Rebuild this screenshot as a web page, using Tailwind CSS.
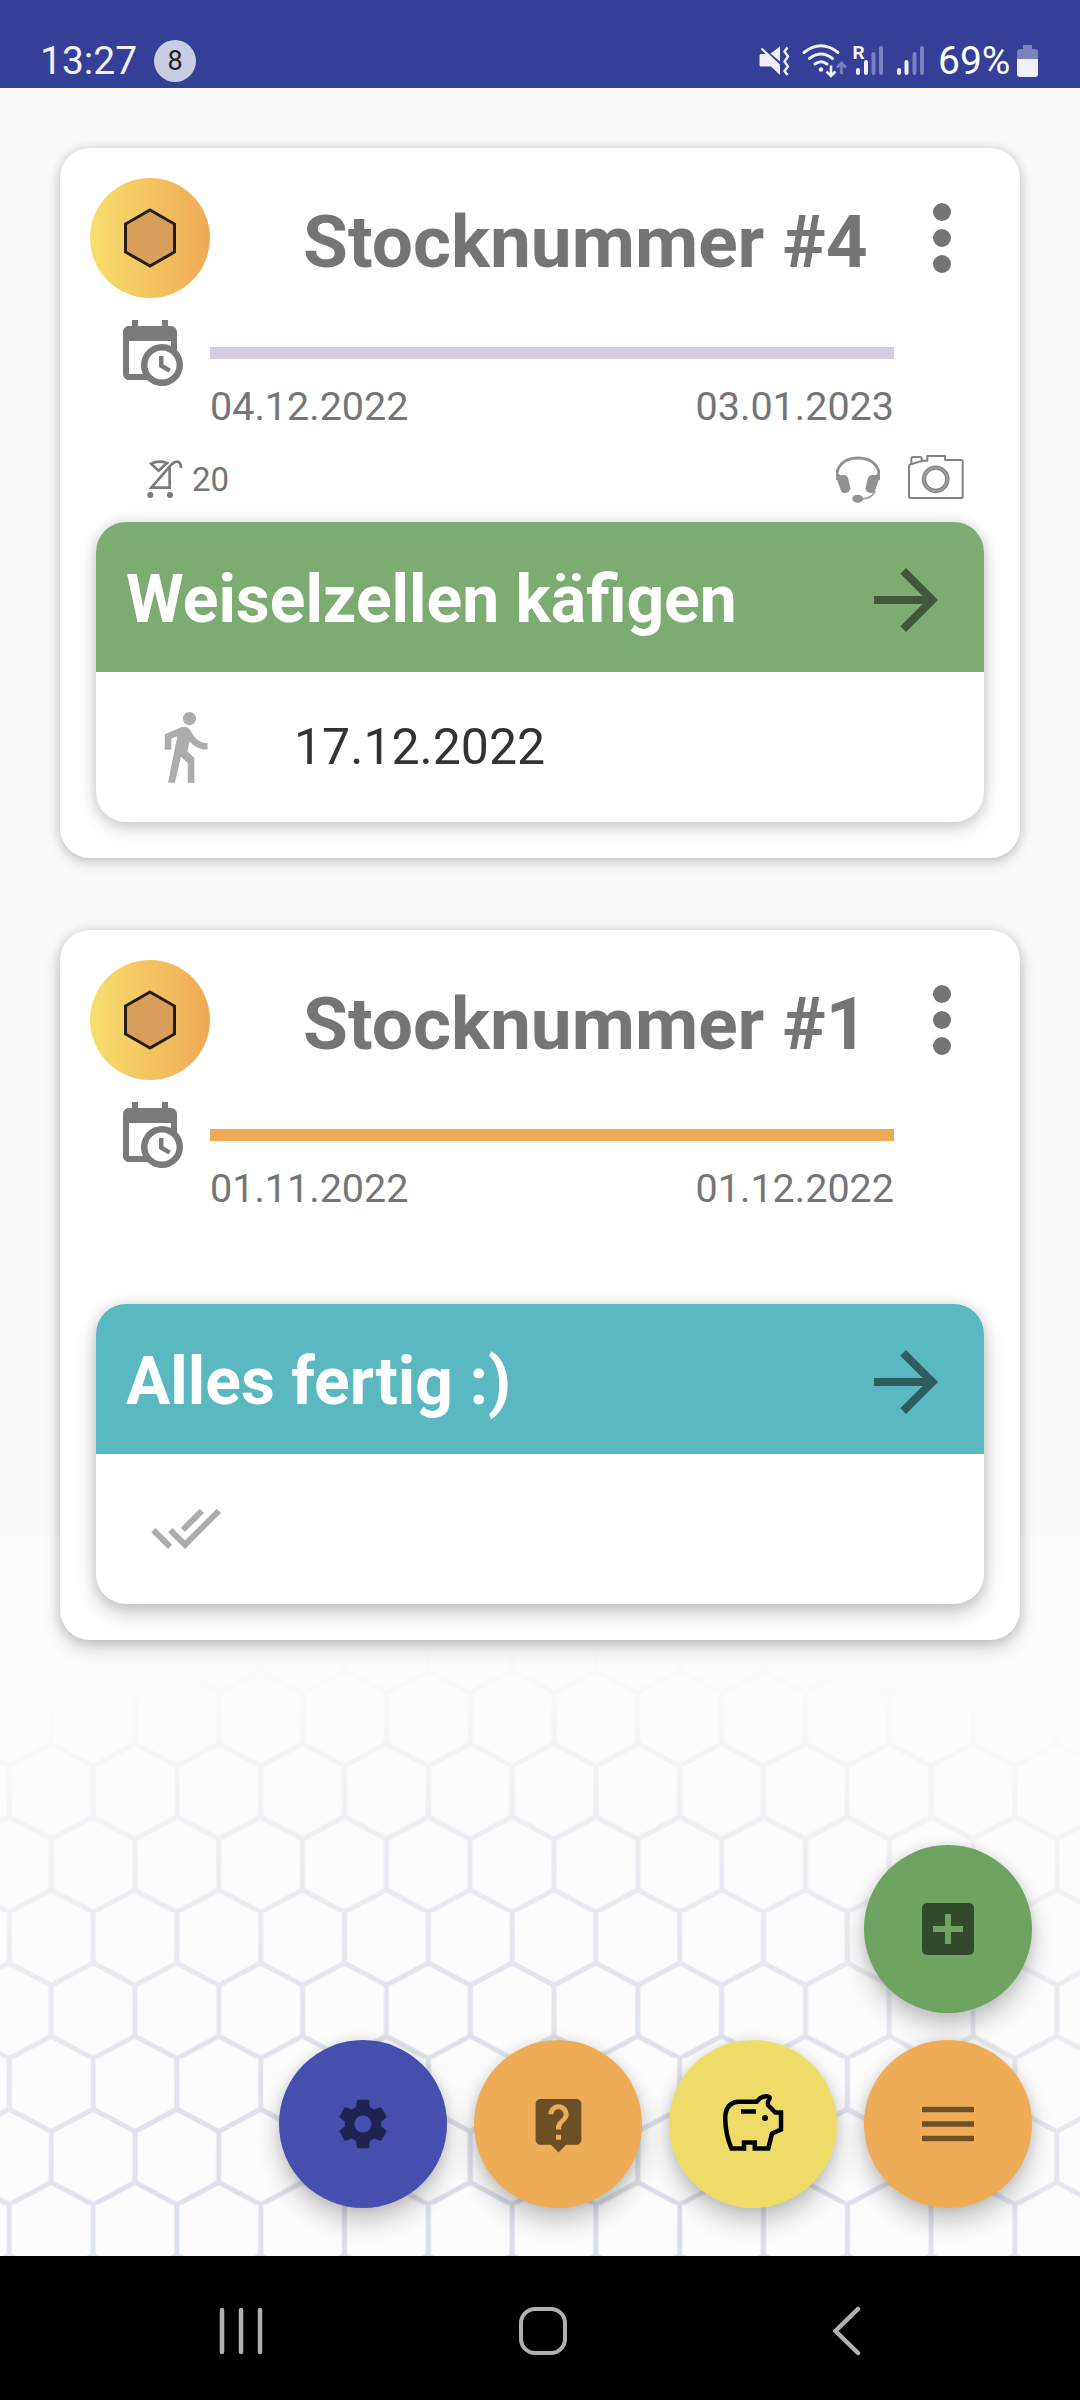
<!DOCTYPE html>
<html lang="de">
<head>
    <meta charset="UTF-8">
    <meta name="viewport" content="width=device-width, initial-scale=1.0">
    <title>Stocknummern</title>
    <script src="https://cdn.jsdelivr.net/npm/@tailwindcss/browser@4"></script>
</head>
<body class="bg-[#fafafa] font-['Roboto',sans-serif]">
    <!-- Shared icons -->
    <svg class="hidden" xmlns="http://www.w3.org/2000/svg">
        <symbol id="hexagon" viewBox="0 0 52 60">
            <path d="M26 2 50.5 16V44L26 58 1.5 44V16Z" fill="#d89f5b" stroke="#241d10" stroke-width="3"/>
        </symbol>
        <symbol id="calendar-clock" viewBox="0 0 24 24">
            <path fill="currentColor" d="M15,13H16.5V15.82L18.94,17.23L18.19,18.53L15,16.69V13M19,8H5V19H9.67C9.24,18.09 9,17.07 9,16A7,7 0 0,1 16,9C17.07,9 18.09,9.24 19,9.67V8M5,21C3.89,21 3,20.1 3,19V5C3,3.89 3.89,3 5,3H6V1H8V3H16V1H18V3H19A2,2 0 0,1 21,5V11.1C22.24,12.36 23,14.09 23,16A7,7 0 0,1 16,23C14.09,23 12.36,22.24 11.1,21H5M16,11.15A4.85,4.85 0 0,0 11.15,16C11.15,18.68 13.32,20.85 16,20.85A4.85,4.85 0 0,0 20.85,16C20.85,13.32 18.68,11.15 16,11.15Z"/>
        </symbol>
        <symbol id="more" viewBox="0 0 18 70">
            <circle cx="9" cy="9" r="9" fill="currentColor"/>
            <circle cx="9" cy="35" r="9" fill="currentColor"/>
            <circle cx="9" cy="61" r="9" fill="currentColor"/>
        </symbol>
        <symbol id="arrow" viewBox="0 0 24 24">
            <path fill="currentColor" d="M12 4l-1.41 1.41L16.17 11H4v2h12.17l-5.58 5.59L12 20l8-8z"/>
        </symbol>
    </svg>

    <div class="relative w-[1080px] h-[2400px] flex flex-col overflow-hidden">
        <!-- Honeycomb background -->
        <svg class="absolute left-0 top-[1536px]" width="1080" height="720" viewBox="0 1536 1080 720">
            <defs>
                <pattern id="comb" patternUnits="userSpaceOnUse" x="9.3" y="1766" width="83.8" height="146.2">
                    <path d="M0 -1V50.8L41.9 73.1L83.8 50.8V-1M41.9 73.1V123.9M-2 147.3L41.9 123.9L85.8 147.3" fill="none" stroke="#d8dce6" stroke-width="5"/>
                </pattern>
                <radialGradient id="fade" gradientUnits="userSpaceOnUse" cx="0" cy="0" r="1" gradientTransform="translate(520 2256) scale(1120 620)">
                    <stop offset="0" stop-color="#fff"/>
                    <stop offset=".35" stop-color="#fff" stop-opacity=".85"/>
                    <stop offset="1" stop-color="#fff" stop-opacity="0"/>
                </radialGradient>
                <mask id="dome" maskUnits="userSpaceOnUse" x="0" y="1536" width="1080" height="720">
                    <rect x="0" y="1536" width="1080" height="720" fill="url(#fade)"/>
                </mask>
            </defs>
            <rect y="1536" width="1080" height="720" fill="#fcfcfc"/>
            <rect y="1536" width="1080" height="720" fill="url(#comb)" mask="url(#dome)"/>
        </svg>

        <!-- Status bar -->
        <header class="relative h-[88px] shrink-0 bg-[#343f98] flex items-start pl-10 pr-[42px] text-[#f1f2fa]">
            <span class="mt-[38px] w-[97px] text-[39px] leading-[46px]">13:27</span>
            <span class="mt-10 ml-[17px] size-[42px] rounded-full bg-[#c9cde4] text-[#222] text-[27px] leading-[42px] text-center">8</span>
            <svg class="ml-auto mt-[36px]" width="167" height="48" viewBox="759 36 167 48" fill="none" stroke="#eff0f9">
                <!-- muted / vibrate -->
                <path d="M759.500 55.500q0-1.500 1.500-1.500h5.500l13.500 12v9l-9-8.500h-10q-1.500 0-1.500-1.500zM770.500 53.500l9.500-7v15z" fill="#eff0f9" stroke="none"/>
                <path d="M761.500 48.500l18 17" stroke-width="2.200"/>
                <path d="M787.500 47.500l-3 4 3.500 5-3.500 5 3.500 5-3.500 4.500 3 4" stroke-width="2.400"/>
                <!-- wifi -->
                <g stroke-width="3" stroke-linecap="round">
                    <path d="M804 52.500q17-13.500 34 0M809.500 58.500q11.500-9 23 0M815 64q6-4.500 12 0"/>
                </g>
                <circle cx="821" cy="69.500" r="2.300" fill="#eff0f9" stroke="none"/>
                <path d="M831 65.500v10M826.500 71.500l4.500 4.500 4.500-4.500" stroke-width="2.600"/>
                <path d="M841.500 74v-10.500M837 67.500l4.500-4.500 4.500 4.500" stroke-width="2.600" stroke="#7a82bf"/>
                <text x="852.500" y="59" font-size="19" font-weight="700" fill="#eff0f9" stroke="none">R</text>
                <!-- signal bars -->
                <g stroke-width="4" stroke-linecap="round">
                    <path d="M858 70v3M866 62v11M899 70v3M906.500 62v11"/>
                    <path d="M873.500 54v19M881 48v25M914.500 54v19M922 48v25" stroke="#7a82bf"/>
                </g>
            </svg>
            <span class="mt-[38px] ml-[12px] w-[79px] text-[39px] leading-[46px] text-white">69%</span>
            <!-- battery -->
            <svg class="mt-[45px]" width="21" height="32" viewBox="0 0 21 32">
                <path d="M6 0h9v4h3q3 0 3 3v7h-21v-7q0-3 3-3h3z" fill="#7a82bf"/>
                <path d="M0 14h21v15q0 3-3 3h-15q-3 0-3-3z" fill="#eff0f9"/>
            </svg>
        </header>

        <main class="relative flex-1 flex flex-col gap-[72px] px-[60px] pt-[60px]">
            <!-- Stocknummer #4 -->
            <section class="h-[710px] rounded-[30px] bg-white px-[30px] pt-[30px] pb-9 flex flex-col text-[#757575] shadow-[0_5px_14px_rgba(0,0,0,0.16),0_0_12px_rgba(0,0,0,0.12)]">
                <div class="h-[120px] flex items-start">
                    <div class="size-[120px] rounded-full bg-linear-to-r from-[#f7df6c] to-[#efa955] flex items-center justify-center">
                        <svg class="w-[52px] h-[60px]"><use href="#hexagon"/></svg>
                    </div>
                    <h2 class="ml-[93px] mt-[22px] text-[73px] leading-[84px] font-bold whitespace-nowrap">Stocknummer #4</h2>
                    <svg class="ml-auto mr-[39px] mt-[25px] w-[18px] h-[70px]"><use href="#more"/></svg>
                </div>
                <div class="h-[132px] flex">
                    <div class="w-[120px] pl-6 pt-[19px]">
                        <svg class="size-[72px] text-[#7a7a7a]"><use href="#calendar-clock"/></svg>
                    </div>
                    <div class="w-[684px] pt-[49px]">
                        <div class="h-3 bg-[#d5cce6]"></div>
                        <div class="mt-6 flex justify-between text-[39.5px] leading-[47px]">
                            <span>04.12.2022</span>
                            <span>03.01.2023</span>
                        </div>
                    </div>
                </div>
                <div class="h-[92px] pt-[6px] pl-[57px] pr-[26px] flex items-center">
                    <!-- stroller -->
                    <svg class="w-[36px] h-[38px]" viewBox="0 0 108 114" fill="none" stroke="#7a7a7a" stroke-width="8">
                        <path d="M12 11Q35 0 60 9L35 32Z"/>
                        <path d="M68 20V83H13L73 14Q84 1 95 6Q102 11 102 24"/>
                        <circle cx="10" cy="105" r="9" fill="#7a7a7a" stroke="none"/>
                        <circle cx="69" cy="105" r="9" fill="#7a7a7a" stroke="none"/>
                    </svg>
                    <span class="ml-[9px] mt-[2px] text-[33px] leading-[38px]">20</span>
                    <!-- headset -->
                    <svg class="ml-auto w-[44px] h-[47px]" viewBox="0 0 132 141">
                        <path d="M4 72C-4 32 24 6 66 6S136 32 128 72" fill="none" stroke="#939191" stroke-width="9"/>
                        <path d="M2 52Q2 80 13 94L20 60ZM130 52Q130 80 119 94L112 60Z" fill="#939191"/>
                        <rect x="10" y="57" width="30" height="54" rx="13" fill="#939191" transform="rotate(-14 25 84)"/>
                        <rect x="92" y="57" width="30" height="54" rx="13" fill="#939191" transform="rotate(14 107 84)"/>
                        <path d="M117 105Q108 128 76 129" fill="none" stroke="#a5a3a3" stroke-width="6"/>
                        <ellipse cx="65" cy="128" rx="16" ry="12" fill="#939191"/>
                    </svg>
                    <!-- camera -->
                    <svg class="ml-[28px] mb-1 w-[56px] h-[44px]" viewBox="0 0 168 132" fill="none" stroke="#828282" stroke-width="6" stroke-linejoin="round">
                        <path d="M3 33Q3 29 8 28L45 17H58V3H111V15H159Q164 15 164 20V125Q164 129 159 129H8Q3 129 3 124Z"/>
                        <path d="M10 27V12Q10 6 16 6H36Q41 6 42 17"/>
                        <circle cx="83" cy="73" r="35" stroke="#858585" stroke-width="13"/>
                        <circle cx="83" cy="73" r="35" stroke="#a0a0a0" stroke-width="5"/>
                    </svg>
                </div>
                <div class="mx-[6px] h-[300px] rounded-[30px] bg-white shadow-[0_6px_18px_rgba(0,0,0,0.18),0_0_14px_rgba(0,0,0,0.1)]">
                    <div class="h-[150px] rounded-t-[30px] bg-[#7dac73] flex items-center justify-between px-[30px] pt-[6px]">
                        <span class="text-[66px] leading-[78px] font-bold text-white">Weiselzellen käfigen</span>
                        <svg class="size-24 text-[#42573c]"><use href="#arrow"/></svg>
                    </div>
                    <div class="h-[150px] flex items-center">
                        <svg class="ml-[49px] mb-[2px] size-[79px]" viewBox="0 0 24 24" fill="#acacac">
                            <path d="M13.500 5.500c1.100 0 2-.9 2-2s-.9-2-2-2-2 .9-2 2 .9 2 2 2zM9.800 8.900L7 23h2.100l1.800-8 2.100 2v6h2v-7.500l-2.100-2 .6-3C14.800 12 16.800 13 19 13v-2c-1.900 0-3.500-1-4.300-2.400l-1-1.600c-.4-.6-1-1-1.700-1-.3 0-.5.1-.8.1L6 8.300V13h2V9.600l1.800-.7"/>
                        </svg>
                        <span class="ml-[70px] text-[50px] leading-[58px] text-[#333]">17.12.2022</span>
                    </div>
                </div>
            </section>

            <!-- Stocknummer #1 -->
            <section class="h-[710px] rounded-[30px] bg-white px-[30px] pt-[30px] pb-9 flex flex-col text-[#757575] shadow-[0_8px_18px_rgba(0,0,0,0.2),0_0_12px_rgba(0,0,0,0.12)]">
                <div class="h-[120px] flex items-start">
                    <div class="size-[120px] rounded-full bg-linear-to-r from-[#f7df6c] to-[#efa955] flex items-center justify-center">
                        <svg class="w-[52px] h-[60px]"><use href="#hexagon"/></svg>
                    </div>
                    <h2 class="ml-[93px] mt-[22px] text-[73px] leading-[84px] font-bold whitespace-nowrap">Stocknummer #1</h2>
                    <svg class="ml-auto mr-[39px] mt-[25px] w-[18px] h-[70px]"><use href="#more"/></svg>
                </div>
                <div class="h-[132px] flex">
                    <div class="w-[120px] pl-6 pt-[19px]">
                        <svg class="size-[72px] text-[#7a7a7a]"><use href="#calendar-clock"/></svg>
                    </div>
                    <div class="w-[684px] pt-[49px]">
                        <div class="h-3 bg-[#efaa56]"></div>
                        <div class="mt-6 flex justify-between text-[39.5px] leading-[47px]">
                            <span>01.11.2022</span>
                            <span>01.12.2022</span>
                        </div>
                    </div>
                </div>
                <div class="h-[92px]"></div>
                <div class="mx-[6px] h-[300px] rounded-[30px] bg-white shadow-[0_9px_20px_rgba(0,0,0,0.22),0_0_14px_rgba(0,0,0,0.1)]">
                    <div class="h-[150px] rounded-t-[30px] bg-[#59b8c0] flex items-center justify-between px-[30px] pt-[6px]">
                        <span class="text-[66px] leading-[78px] font-bold text-white">Alles fertig :)</span>
                        <svg class="size-24 text-[#2e5c5f]"><use href="#arrow"/></svg>
                    </div>
                    <div class="h-[150px] flex items-center">
                        <svg class="ml-[54px] mb-[2px] size-[72px]" viewBox="0 0 24 24" fill="#acacac">
                            <path d="M18 7l-1.410-1.410-6.340 6.340 1.410 1.410L18 7zm4.240-1.410L11.660 16.170 7.480 12l-1.410 1.410L11.660 19l12-12-1.420-1.410zM.41 13.410L6 19l1.410-1.410L1.830 12 .41 13.410z"/>
                        </svg>
                    </div>
                </div>
            </section>
        </main>

        <!-- Floating buttons -->
        <div class="absolute right-12 top-[1845px] flex flex-col items-end gap-[27px]">
            <button class="size-[168px] rounded-full bg-[#6fa361] flex items-center justify-center shadow-[0_14px_24px_rgba(0,0,0,0.22),0_0_12px_rgba(0,0,0,0.1)]">
                <svg width="52" height="52" viewBox="0 0 52 52">
                    <rect width="52" height="52" rx="5" fill="#324a2b"/>
                    <path d="M26 11V41M11 26H41" stroke="#6fa361" stroke-width="6"/>
                </svg>
            </button>
            <div class="flex gap-[27px]">
                <button class="size-[168px] rounded-full bg-[#444fae] flex items-center justify-center shadow-[0_14px_24px_rgba(0,0,0,0.22),0_0_12px_rgba(0,0,0,0.1)]">
                    <svg width="58" height="58" viewBox="0 0 24 24" fill="#1e2350">
                        <path d="M19.430 12.980c.04-.32.07-.64.07-.98s-.03-.66-.07-.98l2.110-1.650c.19-.15.24-.42.12-.64l-2-3.460c-.12-.22-.39-.3-.61-.22l-2.490 1c-.52-.4-1.080-.73-1.690-.98l-.38-2.650C14.460 2.180 14.250 2 14 2h-4c-.25 0-.46.18-.49.42l-.38 2.650c-.61.25-1.170.59-1.690.98l-2.490-1c-.23-.09-.49 0-.61.22l-2 3.460c-.13.22-.07.49.12.64l2.110 1.650c-.04.32-.07.65-.07.98s.03.66.07.98l-2.110 1.650c-.19.15-.24.42-.12.64l2 3.460c.12.22.39.3.61.22l2.490-1c.52.4 1.080.73 1.690.98l.38 2.650c.03.24.24.42.49.42h4c.25 0 .46-.18.49-.42l.38-2.650c.61-.25 1.170-.59 1.690-.98l2.490 1c.23.09.49 0 .61-.22l2-3.460c.12-.22.07-.49-.12-.64l-2.110-1.650zM12 15.500c-1.930 0-3.500-1.570-3.500-3.500s1.570-3.500 3.500-3.500 3.500 1.570 3.500 3.500-1.570 3.500-3.500 3.500z"/>
                    </svg>
                </button>
                <button class="size-[168px] rounded-full bg-[#efac56] flex items-center justify-center shadow-[0_14px_24px_rgba(0,0,0,0.22),0_0_12px_rgba(0,0,0,0.1)]">
                    <svg width="61" height="61" viewBox="0 0 24 24" fill="#6c4e27">
                        <path d="M19 2H5c-1.110 0-2 .9-2 2v14c0 1.100.89 2 2 2h4l3 3 3-3h4c1.100 0 2-.9 2-2V4c0-1.100-.9-2-2-2zm-6 16h-2v-2h2v2zm2.070-7.750l-.9.92C13.450 11.900 13 12.500 13 14h-2v-.5c0-1.100.45-2.100 1.170-2.830l1.240-1.260c.37-.36.59-.86.59-1.410 0-1.100-.9-2-2-2s-2 .9-2 2H8c0-2.210 1.790-4 4-4s4 1.790 4 4c0 .88-.36 1.680-.93 2.250z"/>
                    </svg>
                </button>
                <button class="size-[168px] rounded-full bg-[#efdc68] flex items-center justify-center shadow-[0_14px_24px_rgba(0,0,0,0.22),0_0_12px_rgba(0,0,0,0.1)]">
                    <!-- piggy bank -->
                    <svg width="66" height="66" viewBox="0 0 66 66" fill="none" stroke="#000" stroke-width="4.500">
                        <path d="M18 10.800H36.500Q41 5 47 5.200Q51 5.600 49 8.500Q47.500 10.500 48 14L55.300 21.600H61V38.500L52 42.500L48.300 57.400H34.800V51.500H24V57.400H11.500Q5.500 44 5.200 27Q5.500 12 18 10.800Z"/>
                        <path d="M21 20.500H36"/>
                        <circle cx="45" cy="27" r="3" fill="#000" stroke="none"/>
                    </svg>
                </button>
                <button class="size-[168px] rounded-full bg-[#efac56] flex items-center justify-center shadow-[0_14px_24px_rgba(0,0,0,0.22),0_0_12px_rgba(0,0,0,0.1)]">
                    <svg width="52" height="36" viewBox="0 0 52 36" stroke="#6c4e27" stroke-width="5.500">
                        <path d="M0 3.500H52M0 18H52M0 32.500H52"/>
                    </svg>
                </button>
            </div>
        </div>

        <!-- Navigation bar -->
        <nav class="relative h-36 shrink-0 bg-black flex items-center pl-[219px] pr-[219px] pt-[6px]">
            <svg width="44" height="48" viewBox="0 0 44 48" stroke="#b0b0b0" stroke-width="4.500" stroke-linecap="round">
                <path d="M3 3V45M22 3V45M41 3V45"/>
            </svg>
            <span class="ml-[256px] size-[48px] rounded-[16px] border-[4.5px] border-[#b0b0b0]"></span>
            <svg class="ml-auto" width="28" height="50" viewBox="0 0 28 50" fill="none" stroke="#b0b0b0" stroke-width="4.500" stroke-linecap="round">
                <path d="M25 3L2.500 25L25 47"/>
            </svg>
        </nav>
    </div>
</body>
</html>
